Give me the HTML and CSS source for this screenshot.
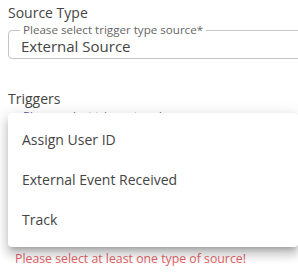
FILE: index.html
```html
<!DOCTYPE html>
<html>
<head>
<meta charset="utf-8">
<link rel="stylesheet" href="styles.css">
</head>
<body>
<div class="form">
  <div class="section">
    <div class="label">Source Type</div>
    <fieldset class="field">
      <legend class="legend">Please select trigger type source*</legend>
      <div class="value">External Source</div>
    </fieldset>
  </div>
  <div class="section triggers">
    <div class="label">Triggers</div>
    <fieldset class="field focused">
      <legend class="legend">Please select trigger type*</legend>
      <div class="value"></div>
    </fieldset>
    <div class="error">Please select at least one type of source!</div>
    <ul class="menu">
      <li class="item">Assign User ID</li>
      <li class="item">External Event Received</li>
      <li class="item">Track</li>
    </ul>
  </div>
</div>
</body>
</html>
```
FILE: styles.css
```css
html, body {
  margin: 0;
  padding: 0;
  background: #fff;
  font-family: "Open Sans", "Liberation Sans", sans-serif;
  color: #444;
  overflow: hidden;
}
.form {
  padding: 3px 0 0 8px;
  display: flex;
  flex-direction: column;
  gap: 30px;
  width: 298px;
  height: 278px;
  box-sizing: border-box;
  overflow: hidden;
}
.section {
  display: flex;
  flex-direction: column;
}
.triggers {
  position: relative;
}
.label {
  font-size: 14px;
  line-height: 20px;
  color: #444;
  margin-bottom: 2px;
}
.field {
  margin: 0 -20px 0 0;
  padding: 0 12px 0 12px;
  border: 1px solid #c4c4c4;
  border-radius: 4px;
  height: 34px;
  box-sizing: border-box;
  min-width: 0;
}
.legend {
  font-size: 11.6px;
  line-height: 10px;
  color: #666;
  padding: 0 3px;
  margin-left: -1px;
}
.focused .legend {
  color: #5c5aa8;
}
.value {
  font-size: 15px;
  line-height: 22px;
  color: #444;
  padding-top: 0;
}
.error {
  margin: 107px 0 0 7px;
  font-size: 12.3px;
  line-height: 14px;
  color: #e5646a;
}
.menu {
  position: absolute;
  left: 0;
  right: 0;
  top: 24px;
  margin: 0;
  padding: 7px 0;
  list-style: none;
  background: #fff;
  border-radius: 4px;
  box-shadow: 0 5px 5px -3px rgba(0,0,0,0.2), 0 8px 10px 1px rgba(0,0,0,0.14), 0 3px 14px 2px rgba(0,0,0,0.12);
}
.item {
  height: 40px;
  line-height: 40px;
  padding: 0 14px;
  font-size: 14px;
  color: #444;
}
```
